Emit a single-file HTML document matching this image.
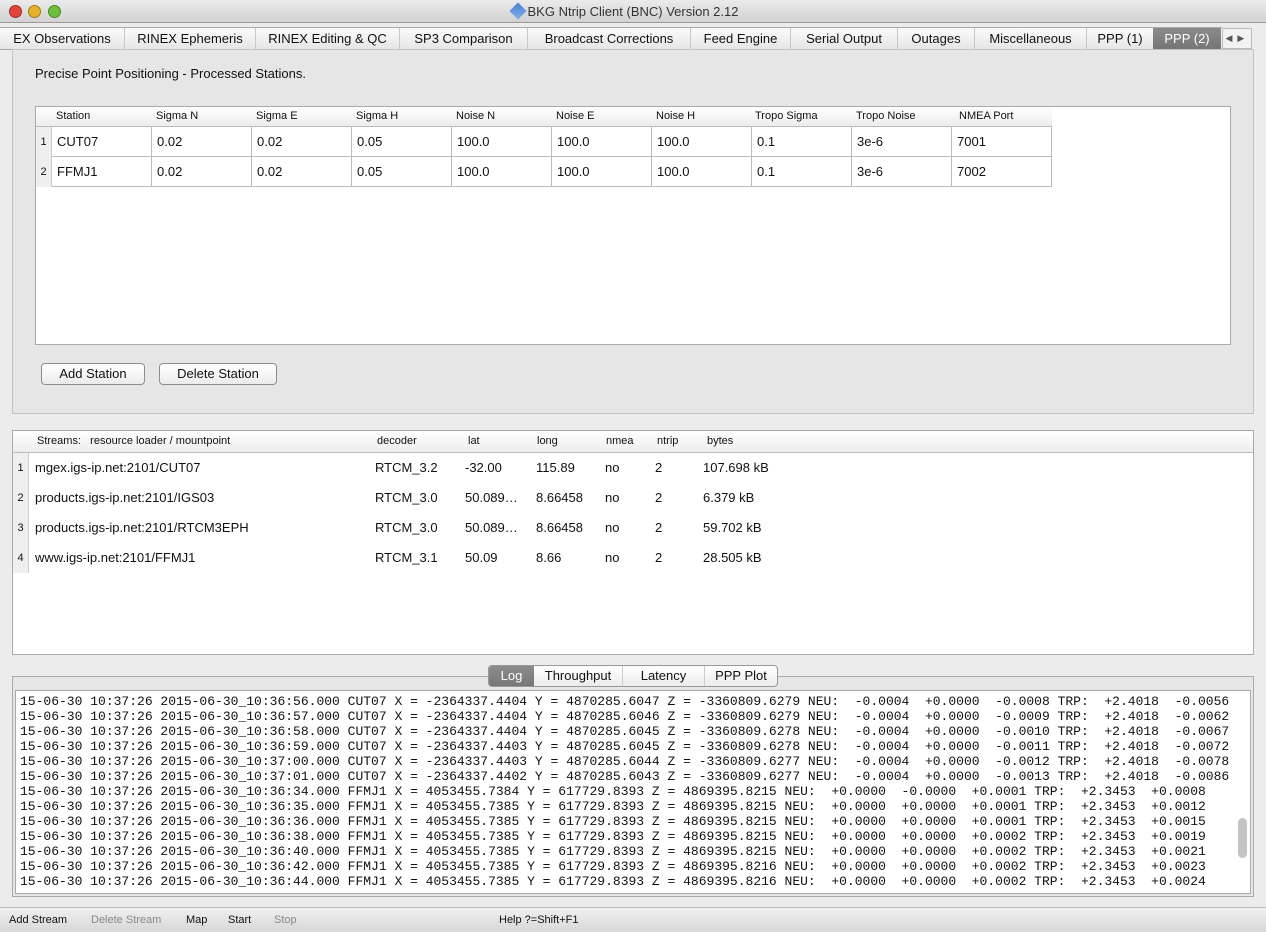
<!DOCTYPE html>
<html><head><meta charset="utf-8"><style>
*{margin:0;padding:0;box-sizing:border-box}
body{width:1266px;height:932px;background:#ececec;font-family:"Liberation Sans",sans-serif;color:#111;position:relative;overflow:hidden}
.a{position:absolute}
.title{left:0;top:0;width:1266px;height:23px;background:linear-gradient(#ebebeb,#d2d2d2);border-bottom:1px solid #999;text-align:center;font-size:13px;line-height:23px;color:#333}
.dot{top:5px;width:13px;height:13px;border-radius:50%;border:1px solid rgba(0,0,0,.3)}
.tabs{left:0;top:27px;height:23px;width:1222px;background:linear-gradient(#fafafa,#e6e6e6);border-top:1px solid #aaa;border-bottom:1px solid #aaa;font-size:13px;line-height:21px;white-space:nowrap}
.tabs span{position:absolute;top:0;height:21px;border-left:1px solid #c8c8c8;text-align:center}
.panel{background:#e6e6e6;border:1px solid #c2c2c2}
.tbl{background:#fff;border:1px solid #aaa}
.hd{font-size:11px;line-height:19px;height:20px}
.hd span,.row span{position:absolute;top:0}
.cell{border-right:1px solid #bbb;border-bottom:1px solid #bbb;font-size:13px}
.btn{background:linear-gradient(#fff,#ececec);border:1px solid #8d8d8d;border-radius:4px;font-size:13px;text-align:center;line-height:20px;height:22px}
.log{font-family:"Liberation Mono",monospace;font-size:13px;line-height:15px;white-space:pre;color:#111}
</style></head><body>
<div class="a title">BKG Ntrip Client (BNC) Version 2.12</div>
<div class="a" style="left:512px;top:5px;width:12px;height:12px;background:linear-gradient(135deg,#4a7fd0,#7fb0e8);transform:rotate(45deg)"></div>
<div class="a dot" style="left:9px;background:#e0443a"></div>
<div class="a dot" style="left:28px;background:#e6b12c"></div>
<div class="a dot" style="left:48px;background:#6fbf3a"></div>

<div class="a tabs">
<span style="left:0;width:124px;border:0">EX Observations</span>
<span style="left:124px;width:131px">RINEX Ephemeris</span>
<span style="left:255px;width:144px">RINEX Editing &amp; QC</span>
<span style="left:399px;width:128px">SP3 Comparison</span>
<span style="left:527px;width:163px">Broadcast Corrections</span>
<span style="left:690px;width:100px">Feed Engine</span>
<span style="left:790px;width:107px">Serial Output</span>
<span style="left:897px;width:77px">Outages</span>
<span style="left:974px;width:112px">Miscellaneous</span>
<span style="left:1086px;width:67px">PPP (1)</span>
<span style="left:1153px;width:68px;background:linear-gradient(#8a8a8a,#767676);color:#fff;border-left:0">PPP (2)</span>
</div>
<div class="a" style="left:1222px;top:28px;width:30px;height:21px;background:#f2f2f2;border:1px solid #bbb;font-size:9px;line-height:19px;color:#555">&nbsp;◀&nbsp;&nbsp;▶</div>

<div class="a panel" style="left:12px;top:49px;width:1242px;height:365px"></div>
<div class="a" style="left:35px;top:66px;font-size:13px">Precise Point Positioning - Processed Stations.</div>
<div class="a tbl" style="left:35px;top:106px;width:1196px;height:239px">
 <div class="a hd" style="left:0;top:0;width:1016px;background:linear-gradient(#fff,#ededed);border-bottom:1px solid #bbb">
  <span style="left:20px">Station</span><span style="left:120px">Sigma N</span><span style="left:220px">Sigma E</span><span style="left:320px">Sigma H</span><span style="left:420px">Noise N</span><span style="left:520px">Noise E</span><span style="left:620px">Noise H</span><span style="left:719px">Tropo Sigma</span><span style="left:820px">Tropo Noise</span><span style="left:923px">NMEA Port</span>
 </div>
 <div class="a" style="left:0;top:20px;width:16px;height:60px;background:#efefef;border-right:1px solid #ccc;font-size:11px;line-height:30px;text-align:center">1<br>2</div>
</div>
<div class="a" id="pt" style="left:52px;top:127px"></div>

<div class="a btn" style="left:41px;top:363px;width:104px">Add Station</div>
<div class="a btn" style="left:159px;top:363px;width:118px">Delete Station</div>

<div class="a tbl" style="left:12px;top:430px;width:1242px;height:225px">
 <div class="a hd" style="left:0;top:0;width:1240px;height:22px;line-height:21px;background:linear-gradient(#fff,#ededed);border-bottom:1px solid #bbb">
  <span style="left:24px">Streams:&nbsp;&nbsp; resource loader / mountpoint</span><span style="left:364px">decoder</span><span style="left:455px">lat</span><span style="left:524px">long</span><span style="left:593px">nmea</span><span style="left:644px">ntrip</span><span style="left:694px">bytes</span>
 </div>
 <div class="a" style="left:0;top:22px;width:16px;height:120px;background:#efefef;border-right:1px solid #ccc;font-size:11px;line-height:30px;text-align:center">1<br>2<br>3<br>4</div>
 <div class="a" style="left:22px;top:22px;font-size:13px;line-height:30px;white-space:pre">mgex.igs-ip.net:2101/CUT07<br>products.igs-ip.net:2101/IGS03<br>products.igs-ip.net:2101/RTCM3EPH<br>www.igs-ip.net:2101/FFMJ1</div>
 <div class="a" style="left:362px;top:22px;font-size:13px;line-height:30px">RTCM_3.2<br>RTCM_3.0<br>RTCM_3.0<br>RTCM_3.1</div>
 <div class="a" style="left:452px;top:22px;font-size:13px;line-height:30px">-32.00<br>50.089…<br>50.089…<br>50.09</div>
 <div class="a" style="left:523px;top:22px;font-size:13px;line-height:30px">115.89<br>8.66458<br>8.66458<br>8.66</div>
 <div class="a" style="left:592px;top:22px;font-size:13px;line-height:30px">no<br>no<br>no<br>no</div>
 <div class="a" style="left:642px;top:22px;font-size:13px;line-height:30px">2<br>2<br>2<br>2</div>
 <div class="a" style="left:690px;top:22px;font-size:13px;line-height:30px">107.698 kB<br>6.379 kB<br>59.702 kB<br>28.505 kB</div>
</div>

<div class="a panel" style="left:12px;top:676px;width:1242px;height:221px;border-color:#aaa"></div>
<div class="a" style="left:488px;top:665px;width:290px;height:22px;background:linear-gradient(#fff,#ececec);border:1px solid #999;border-radius:4px;font-size:13px;line-height:20px">
 <span class="a" style="left:0;width:45px;height:20px;background:linear-gradient(#8c8c8c,#777);color:#fff;text-align:center;border-radius:3px 0 0 3px">Log</span>
 <span class="a" style="left:45px;width:88px;text-align:center">Throughput</span>
 <span class="a" style="left:133px;width:82px;text-align:center;border-left:1px solid #ccc">Latency</span>
 <span class="a" style="left:215px;width:73px;text-align:center;border-left:1px solid #ccc">PPP Plot</span>
</div>
<div class="a" style="left:15px;top:690px;width:1236px;height:204px;background:#fff;border:1px solid #aaa"></div>
<div class="a log" style="left:20px;top:694px">15-06-30 10:37:26 2015-06-30_10:36:56.000 CUT07 X = -2364337.4404 Y = 4870285.6047 Z = -3360809.6279 NEU:  -0.0004  +0.0000  -0.0008 TRP:  +2.4018  -0.0056
15-06-30 10:37:26 2015-06-30_10:36:57.000 CUT07 X = -2364337.4404 Y = 4870285.6046 Z = -3360809.6279 NEU:  -0.0004  +0.0000  -0.0009 TRP:  +2.4018  -0.0062
15-06-30 10:37:26 2015-06-30_10:36:58.000 CUT07 X = -2364337.4404 Y = 4870285.6045 Z = -3360809.6278 NEU:  -0.0004  +0.0000  -0.0010 TRP:  +2.4018  -0.0067
15-06-30 10:37:26 2015-06-30_10:36:59.000 CUT07 X = -2364337.4403 Y = 4870285.6045 Z = -3360809.6278 NEU:  -0.0004  +0.0000  -0.0011 TRP:  +2.4018  -0.0072
15-06-30 10:37:26 2015-06-30_10:37:00.000 CUT07 X = -2364337.4403 Y = 4870285.6044 Z = -3360809.6277 NEU:  -0.0004  +0.0000  -0.0012 TRP:  +2.4018  -0.0078
15-06-30 10:37:26 2015-06-30_10:37:01.000 CUT07 X = -2364337.4402 Y = 4870285.6043 Z = -3360809.6277 NEU:  -0.0004  +0.0000  -0.0013 TRP:  +2.4018  -0.0086
15-06-30 10:37:26 2015-06-30_10:36:34.000 FFMJ1 X = 4053455.7384 Y = 617729.8393 Z = 4869395.8215 NEU:  +0.0000  -0.0000  +0.0001 TRP:  +2.3453  +0.0008
15-06-30 10:37:26 2015-06-30_10:36:35.000 FFMJ1 X = 4053455.7385 Y = 617729.8393 Z = 4869395.8215 NEU:  +0.0000  +0.0000  +0.0001 TRP:  +2.3453  +0.0012
15-06-30 10:37:26 2015-06-30_10:36:36.000 FFMJ1 X = 4053455.7385 Y = 617729.8393 Z = 4869395.8215 NEU:  +0.0000  +0.0000  +0.0001 TRP:  +2.3453  +0.0015
15-06-30 10:37:26 2015-06-30_10:36:38.000 FFMJ1 X = 4053455.7385 Y = 617729.8393 Z = 4869395.8215 NEU:  +0.0000  +0.0000  +0.0002 TRP:  +2.3453  +0.0019
15-06-30 10:37:26 2015-06-30_10:36:40.000 FFMJ1 X = 4053455.7385 Y = 617729.8393 Z = 4869395.8215 NEU:  +0.0000  +0.0000  +0.0002 TRP:  +2.3453  +0.0021
15-06-30 10:37:26 2015-06-30_10:36:42.000 FFMJ1 X = 4053455.7385 Y = 617729.8393 Z = 4869395.8216 NEU:  +0.0000  +0.0000  +0.0002 TRP:  +2.3453  +0.0023
15-06-30 10:37:26 2015-06-30_10:36:44.000 FFMJ1 X = 4053455.7385 Y = 617729.8393 Z = 4869395.8216 NEU:  +0.0000  +0.0000  +0.0002 TRP:  +2.3453  +0.0024</div>
<div class="a" style="left:1238px;top:818px;width:9px;height:40px;background:#c4c4c4;border-radius:5px"></div>

<div class="a" style="left:0;top:907px;width:1266px;height:25px;background:linear-gradient(#f0f0f0,#d8d8d8);border-top:1px solid #bbb;font-size:11px;line-height:24px">
 <span class="a" style="left:9px">Add Stream</span>
 <span class="a" style="left:91px;color:#888">Delete Stream</span>
 <span class="a" style="left:186px">Map</span>
 <span class="a" style="left:228px">Start</span>
 <span class="a" style="left:274px;color:#888">Stop</span>
 <span class="a" style="left:499px">Help ?=Shift+F1</span>
</div>

<div class="a" style="left:52px;top:127px;font-size:13px">
 <div style="position:relative;width:1000px;height:60px">
  <div class="a cell" style="left:0;top:0;width:100px;height:30px;padding:7px 0 0 5px">CUT07</div>
  <div class="a cell" style="left:100px;top:0;width:100px;height:30px;padding:7px 0 0 5px">0.02</div>
  <div class="a cell" style="left:200px;top:0;width:100px;height:30px;padding:7px 0 0 5px">0.02</div>
  <div class="a cell" style="left:300px;top:0;width:100px;height:30px;padding:7px 0 0 5px">0.05</div>
  <div class="a cell" style="left:400px;top:0;width:100px;height:30px;padding:7px 0 0 5px">100.0</div>
  <div class="a cell" style="left:500px;top:0;width:100px;height:30px;padding:7px 0 0 5px">100.0</div>
  <div class="a cell" style="left:600px;top:0;width:100px;height:30px;padding:7px 0 0 5px">100.0</div>
  <div class="a cell" style="left:700px;top:0;width:100px;height:30px;padding:7px 0 0 5px">0.1</div>
  <div class="a cell" style="left:800px;top:0;width:100px;height:30px;padding:7px 0 0 5px">3e-6</div>
  <div class="a cell" style="left:900px;top:0;width:100px;height:30px;padding:7px 0 0 5px">7001</div>
  <div class="a cell" style="left:0;top:30px;width:100px;height:30px;padding:7px 0 0 5px">FFMJ1</div>
  <div class="a cell" style="left:100px;top:30px;width:100px;height:30px;padding:7px 0 0 5px">0.02</div>
  <div class="a cell" style="left:200px;top:30px;width:100px;height:30px;padding:7px 0 0 5px">0.02</div>
  <div class="a cell" style="left:300px;top:30px;width:100px;height:30px;padding:7px 0 0 5px">0.05</div>
  <div class="a cell" style="left:400px;top:30px;width:100px;height:30px;padding:7px 0 0 5px">100.0</div>
  <div class="a cell" style="left:500px;top:30px;width:100px;height:30px;padding:7px 0 0 5px">100.0</div>
  <div class="a cell" style="left:600px;top:30px;width:100px;height:30px;padding:7px 0 0 5px">100.0</div>
  <div class="a cell" style="left:700px;top:30px;width:100px;height:30px;padding:7px 0 0 5px">0.1</div>
  <div class="a cell" style="left:800px;top:30px;width:100px;height:30px;padding:7px 0 0 5px">3e-6</div>
  <div class="a cell" style="left:900px;top:30px;width:100px;height:30px;padding:7px 0 0 5px">7002</div>
 </div>
</div>
</body></html>
